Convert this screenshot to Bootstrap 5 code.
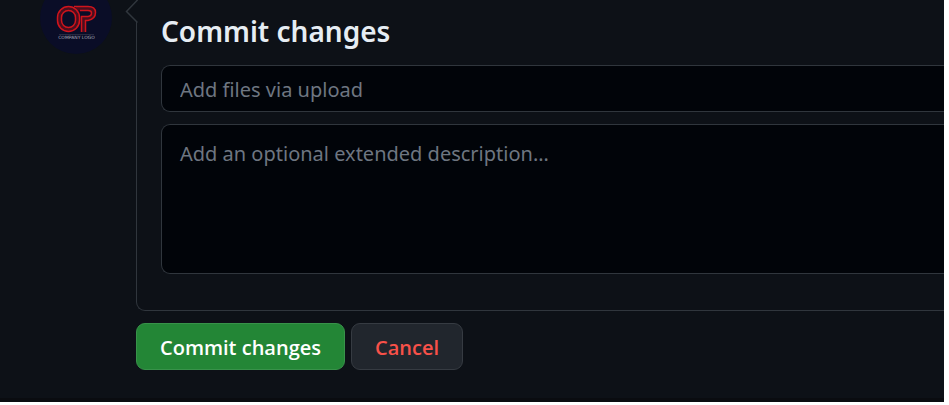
<!DOCTYPE html>
<html lang="en" data-bs-theme="dark">
<head>
<meta charset="utf-8">
<meta name="viewport" content="width=device-width, initial-scale=1">
<title>Commit changes</title>
<link href="https://cdn.jsdelivr.net/npm/bootstrap@5.3.0/dist/css/bootstrap.min.css" rel="stylesheet">
<style>
  body { background: #fff; font-family: "Noto Sans", "Open Sans", sans-serif; padding: 0 5px 3px 0; }
  .commit-page { background: #0d1117; border-bottom: 4px solid #0a0c10; padding-left: 40px; min-height: calc(100vh - 3px); }
  .avatar { width: 72px; height: 72px; margin-top: -18px; margin-right: 24px; }
  .commit-panel { border: 1px solid #30363d; border-width: 0 0 1px 1px; border-bottom-left-radius: 9px; padding: 11px 0 36px 24px; margin-bottom: 12px; }
  .caret { left: -12px; top: -11px; width: 13px; height: 46px; }
  .commit-title { font-size: 28px; line-height: 40px; color: #e6edf3; margin-bottom: 14px; }
  .commit-fields { gap: 12px; }
  .commit-field, .commit-field:focus { background: #010409; border: 1px solid #30363d; border-width: 1px 0 1px 1px; border-radius: 9px 0 0 9px; padding: 8px 18px 6px; font-size: 20px; line-height: 31px; color: #e6edf3; }
  .commit-field::placeholder { color: #6e7681; }
  .commit-text { height: 150px; padding-top: 13px; resize: none; }
  .commit-actions { gap: 6px; }
  .commit-btn { font-family: "Open Sans", "Noto Sans", sans-serif; font-size: 20px; line-height: 31px; padding: 8px 23px 6px; border-radius: 9px; }
  .btn-commit, .btn-commit:hover { background: #238636; border-color: #38924a; color: #fff; }
  .btn-cancel, .btn-cancel:hover { background: #21262d; border-color: #363b42; color: #f85149; }
</style>
<script src="https://cdn.jsdelivr.net/npm/bootstrap@5.3.0/dist/js/bootstrap.bundle.min.js" defer></script>
</head>
<body>
<main class="commit-page d-flex align-items-start overflow-hidden">
  <svg class="avatar flex-shrink-0" viewBox="0 0 72 72" role="img" aria-label="Company logo">
    <circle cx="36" cy="36" r="36" fill="#0a0d27"/>
    <g fill="none" stroke="#4a0e1e" stroke-width="4">
      <rect x="19.500" y="26.500" width="18" height="21" rx="9"/>
      <path d="M43 50V36H48Q53.500 35 53.500 30.500Q53.500 26.500 48 26.500H36"/>
    </g>
    <g fill="none" stroke="#cf141c" stroke-width="1.500">
      <rect x="17.500" y="24.500" width="22" height="25" rx="11"/>
      <rect x="21.500" y="28.500" width="14" height="17" rx="7"/>
      <path d="M41.500 50V34.500H48Q51.500 34 51.500 31Q51.500 28.500 48 28.500H40M45.500 50V38.500H48Q55.500 37 55.500 30.500Q55.500 24.500 48 24.500H34"/>
    </g>
    <path d="M19 52.500H54" stroke="#45485d" stroke-width=".5"/>
    <text x="36.500" y="57" text-anchor="middle" font-family="DejaVu Sans, sans-serif" font-size="4.500" fill="#a5a8b8">COMPANY LOGO</text>
  </svg>
  <form class="flex-grow-1" onsubmit="return false">
    <section class="commit-panel position-relative">
      <svg class="caret position-absolute" viewBox="0 0 13 46" aria-hidden="true">
        <path d="M13 10L1.500 22.500L13 34Z" fill="#0d1117"/>
        <path d="M13 10.500L1.500 22.500L12.500 33.500" fill="none" stroke="#30363d" stroke-width="1.500"/>
      </svg>
      <h1 class="commit-title fw-semibold">Commit changes</h1>
      <div class="commit-fields d-flex flex-column">
        <input class="form-control commit-field" type="text" aria-label="Commit summary" placeholder="Add files via upload">
        <textarea class="form-control commit-field commit-text" aria-label="Extended description" placeholder="Add an optional extended description…"></textarea>
      </div>
    </section>
    <div class="commit-actions d-flex">
      <button class="btn commit-btn btn-commit fw-semibold" type="submit">Commit changes</button>
      <button class="btn commit-btn btn-cancel fw-semibold" type="button">Cancel</button>
    </div>
  </form>
</main>
</body>
</html>
